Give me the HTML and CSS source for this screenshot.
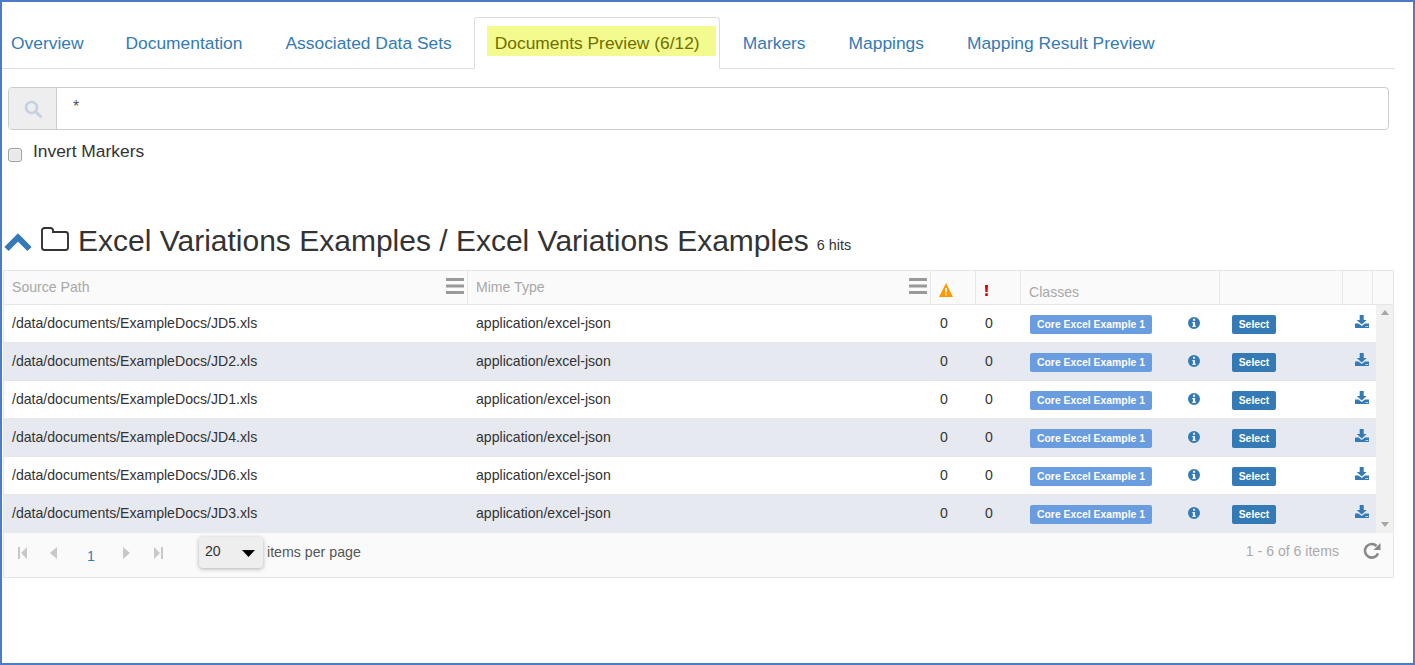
FILE: index.html
```html
<!DOCTYPE html>
<html lang="en">
<head>
<meta charset="utf-8">
<title>Documents Preview</title>
<link rel="stylesheet" href="styles.css">
</head>
<body>
<svg class="defs" width="0" height="0" aria-hidden="true">
  <symbol id="i-menu" viewBox="0 0 18 16"><rect y="0" width="18" height="3" rx="0.5"/><rect y="6.500" width="18" height="3" rx="0.5"/><rect y="13" width="18" height="3" rx="0.5"/></symbol>
  <symbol id="i-info" viewBox="0 0 12 12"><path fill-rule="evenodd" d="M6 0a6 6 0 1 1 0 12A6 6 0 0 1 6 0zM5 1.800v2h2.100v-2zM4.300 5v1.200H5v2.600h-.7V10h3.500V8.800H7.100V5z"/></symbol>
  <symbol id="i-down" viewBox="0 0 14 13"><path d="M4.700 0h4v5h3L6.700 9.500 1.700 5h3z"/><path d="M0 8.500h3.500L6.700 11l3.200-2.500H14V13H0z"/><rect x="10.500" y="11" width="1" height="1" fill="#fff"/><rect x="12.200" y="11" width="1" height="1" fill="#fff"/></symbol>
</svg>
<div class="frame">
  <nav class="tabs">
    <a class="tab">Overview</a>
    <a class="tab">Documentation</a>
    <a class="tab">Associated Data Sets</a>
    <a class="tab active"><span class="mark">Documents Preview (6/12)</span></a>
    <a class="tab">Markers</a>
    <a class="tab">Mappings</a>
    <a class="tab">Mapping Result Preview</a>
  </nav>

  <div class="search">
    <span class="addon">
      <svg width="18" height="18" viewBox="0 0 18 18"><circle cx="7.500" cy="7.500" r="5.500" fill="none" stroke="#c6d0e0" stroke-width="2.600"/><path d="M11.500 11.500l5 5" stroke="#c6d0e0" stroke-width="3" stroke-linecap="round"/></svg>
    </span>
    <span class="query">*</span>
  </div>

  <label class="invert"><span class="check"></span><span>Invert Markers</span></label>

  <h2 class="title">
    <svg class="chev" width="28" height="20" viewBox="0 0 28 20"><path d="M2.500 17L14 5.500 25.500 17" fill="none" stroke="#337ab7" stroke-width="6"/></svg>
    <svg class="folder" width="28" height="24" viewBox="0 0 28 24"><path d="M1 20.500V3.500A2.500 2.500 0 0 1 3.500 1h6A2.500 2.500 0 0 1 12 3.500V5h12.500A2.500 2.500 0 0 1 27 7.500v13a2.500 2.500 0 0 1-2.500 2.500h-21A2.500 2.500 0 0 1 1 20.500z" fill="none" stroke="#333" stroke-width="1.900"/></svg>
    <span>Excel Variations Examples / Excel Variations Examples</span>
    <small class="hits">6 hits</small>
  </h2>

  <section class="grid">
    <div class="row head">
      <div class="cell"><span>Source Path</span><svg class="menu" width="18" height="16"><use href="#i-menu"/></svg></div>
      <div class="cell"><span>Mime Type</span><svg class="menu" width="18" height="16"><use href="#i-menu"/></svg></div>
      <div class="cell warn-cell"><svg width="14" height="14" viewBox="0 0 14 14"><path fill-rule="evenodd" d="M7 0l7 14H0zM6 5l.3 4.500h1.400L8 5zM6.200 10.500v1.800h1.600v-1.800z" fill="#f90"/></svg></div>
      <div class="cell err-cell"><svg width="3" height="11" viewBox="0 0 3 11"><path d="M0 0h3L2.600 7H.4zM.2 8.300h2.600V11H.2z" fill="#e30000"/></svg></div>
      <div class="cell classes"><span>Classes</span></div>
      <div class="cell"></div>
      <div class="cell"></div>
      <div class="cell"></div>
    </div>
    <div class="body">
      <div class="rows">
        <div class="row item"><div class="cell">/data/documents/ExampleDocs/JD5.xls</div><div class="cell">application/excel-json</div><div class="cell num">0</div><div class="cell num">0</div><div class="cell act"><span class="label">Core Excel Example 1</span><svg class="info" width="12" height="12"><use href="#i-info"/></svg></div><div class="cell sel"><span class="btn">Select</span></div><div class="cell dl"><svg width="14" height="13"><use href="#i-down"/></svg></div></div>
        <div class="row item alt"><div class="cell">/data/documents/ExampleDocs/JD2.xls</div><div class="cell">application/excel-json</div><div class="cell num">0</div><div class="cell num">0</div><div class="cell act"><span class="label">Core Excel Example 1</span><svg class="info" width="12" height="12"><use href="#i-info"/></svg></div><div class="cell sel"><span class="btn">Select</span></div><div class="cell dl"><svg width="14" height="13"><use href="#i-down"/></svg></div></div>
        <div class="row item"><div class="cell">/data/documents/ExampleDocs/JD1.xls</div><div class="cell">application/excel-json</div><div class="cell num">0</div><div class="cell num">0</div><div class="cell act"><span class="label">Core Excel Example 1</span><svg class="info" width="12" height="12"><use href="#i-info"/></svg></div><div class="cell sel"><span class="btn">Select</span></div><div class="cell dl"><svg width="14" height="13"><use href="#i-down"/></svg></div></div>
        <div class="row item alt"><div class="cell">/data/documents/ExampleDocs/JD4.xls</div><div class="cell">application/excel-json</div><div class="cell num">0</div><div class="cell num">0</div><div class="cell act"><span class="label">Core Excel Example 1</span><svg class="info" width="12" height="12"><use href="#i-info"/></svg></div><div class="cell sel"><span class="btn">Select</span></div><div class="cell dl"><svg width="14" height="13"><use href="#i-down"/></svg></div></div>
        <div class="row item"><div class="cell">/data/documents/ExampleDocs/JD6.xls</div><div class="cell">application/excel-json</div><div class="cell num">0</div><div class="cell num">0</div><div class="cell act"><span class="label">Core Excel Example 1</span><svg class="info" width="12" height="12"><use href="#i-info"/></svg></div><div class="cell sel"><span class="btn">Select</span></div><div class="cell dl"><svg width="14" height="13"><use href="#i-down"/></svg></div></div>
        <div class="row item alt"><div class="cell">/data/documents/ExampleDocs/JD3.xls</div><div class="cell">application/excel-json</div><div class="cell num">0</div><div class="cell num">0</div><div class="cell act"><span class="label">Core Excel Example 1</span><svg class="info" width="12" height="12"><use href="#i-info"/></svg></div><div class="cell sel"><span class="btn">Select</span></div><div class="cell dl"><svg width="14" height="13"><use href="#i-down"/></svg></div></div>
      </div>
      <div class="scrollbar">
        <svg width="8" height="5" viewBox="0 0 8 5"><path d="M4 0l4 5H0z" fill="#a6a6a6"/></svg>
        <svg width="8" height="5" viewBox="0 0 8 5"><path d="M4 5l4-5H0z" fill="#a6a6a6"/></svg>
      </div>
    </div>
    <footer class="pager">
      <div class="nav">
        <svg class="nav-i" width="10" height="12" viewBox="0 0 10 12"><path d="M0 0h2v12H0zM9 0v12L3 6z"/></svg>
        <svg class="nav-i prev" width="7" height="12" viewBox="0 0 7 12"><path d="M7 0v12L0 6z"/></svg>
        <span class="page">1</span>
        <svg class="nav-i next" width="7" height="12" viewBox="0 0 7 12"><path d="M0 0v12l7-6z"/></svg>
        <svg class="nav-i last" width="10" height="12" viewBox="0 0 10 12"><path d="M10 0H8v12h2zM1 0v12l6-6z"/></svg>
      </div>
      <div class="size"><span>20</span><svg width="13" height="7" viewBox="0 0 13 7"><path d="M0 0h13L6.500 7z"/></svg></div>
      <span class="per">items per page</span>
      <span class="count">1 - 6 of 6 items</span>
      <svg class="refresh" width="18" height="18" viewBox="0 0 18 18"><path d="M15 11.500A6.800 6.800 0 1 1 13.600 4" fill="none" stroke="#888" stroke-width="2.600"/><path d="M17.500 1v7h-7z" fill="#888"/></svg>
    </footer>
  </section>
</div>
</body>
</html>
```

FILE: styles.css
```css
* { box-sizing: border-box; }
html, body { margin: 0; padding: 0; background: #fff; }
body { font-family: "Liberation Sans", Arial, sans-serif; font-size: 14.1px; color: #333; }
.defs { display: block; height: 0; }
.frame { width: 1415px; height: 665px; border: 2px solid #4a7cc9; overflow: hidden; }

.tabs { display: flex; height: 67px; padding-top: 15px; border-bottom: 1px solid #ddd; margin-right: 18px; }
.tab { display: block; height: 52px; padding: 15px 20px 0; margin-right: 1px; font-size: 17.4px; line-height: 20px; color: #337ab7; border: 1px solid transparent; white-space: nowrap; }
.tab:first-child { padding: 15px 19px 0 8px; }
.active { flex: none; width: 246px; padding: 8px 0 0 12px; margin-right: 2px; background: #fff; border-color: #ddd #ddd #fff; border-radius: 4px 4px 0 0; color: #333; }
.mark { display: block; width: 229px; height: 30px; padding: 7px 0 0 8px; background: #f3fb8e; color: #6e6e00; }

.search { display: flex; height: 43px; margin: 18px 0 0 6px; width: 1381px; border: 1px solid #ccc; border-radius: 4px; }
.addon { display: flex; width: 48px; align-items: center; justify-content: center; background: #eee; border-right: 1px solid #ccc; border-radius: 3px 0 0 3px; }
.query { padding: 9px 0 0 16px; font-size: 16px; line-height: 20px; color: #555; }

.invert { display: flex; margin: 10px 0 0 6px; font-size: 17.4px; line-height: 22px; color: #333; }
.check { width: 14px; height: 14px; margin: 8px 11px 0 0; background: #e9e9e9; border: 1px solid #a0a0a0; border-radius: 3px; box-shadow: inset 0 0 0 1px #f0f0f0; }

.title { display: flex; align-items: center; height: 40px; margin: 59px 0 0 0; font-weight: 400; font-size: 30px; line-height: 40px; color: #333; white-space: nowrap; }
.chev { margin: 1px 0 0 2px; }
.folder { margin: -5px 9px 0 9px; }
.hits { margin: 8px 0 0 8px; font-size: 14.4px; color: #333; }

.grid { width: 1391px; height: 308px; margin: 9px 0 0 1px; border: 1px solid #e6e6e6; }
.row { display: grid; grid-template-columns: 464px 463px 45px 45px 199px 123px 30px 21px; }
.head { height: 34px; background: #fafafa; border-bottom: 1px solid #e6e6e6; color: #a8a8a8; }
.head .cell { display: flex; justify-content: space-between; padding: 8px 3px 0 8px; line-height: 16px; border-right: 1px solid #e6e6e6; }
.head .cell:last-child { border-right: 0; }
.menu { fill: #999; margin-top: -1px; }
.head .warn-cell { padding: 12px 0 0 8px; justify-content: flex-start; }
.head .err-cell { padding: 14px 0 0 9px; justify-content: flex-start; }
.head .classes { padding: 13px 0 0 8px; }

.body { display: flex; height: 228px; }
.rows { width: 1372px; }
.item { height: 38px; grid-template-columns: 464px 463px 45px 45px 199px 123px 33px; border-bottom: 1px solid #e6e6e6; background: #fff; color: #333; }
.item:last-child { border-bottom: 0; }
.alt { background: #e6e9f0; }
.item .cell { padding: 10px 0 0 8px; line-height: 16px; white-space: nowrap; }
.item .num { padding: 10px 0 0 9px; }
.item .act { display: flex; align-items: flex-start; padding: 10px 0 0 9px; }
.label { display: block; width: 122px; height: 19px; background: #6a9de0; color: #fff; font-size: 10.4px; font-weight: 700; line-height: 19px; text-align: center; border-radius: 2px; }
.info { fill: #337ab7; margin: 2px 0 0 36px; }
.item .sel { padding: 10px 0 0 12px; }
.btn { display: block; width: 44px; height: 19px; background: #337ab7; color: #fff; font-size: 10.4px; font-weight: 700; line-height: 19px; text-align: center; border-radius: 2px; }
.item .dl { padding: 10px 0 0 12px; fill: #337ab7; }

.scrollbar { display: flex; width: 17px; flex-direction: column; justify-content: space-between; align-items: center; padding: 5px 0 6px; background: #f1f1f1; }

.pager { display: flex; align-items: flex-start; height: 44px; background: #fafafa; color: #333; }
.nav { display: flex; align-items: flex-start; width: 195px; padding: 14px 0 0 14px; }
.nav-i { fill: #c8c8c8; flex: none; }
.prev { margin-left: 22px; }
.page { width: 10px; margin: -1px 0 0 30px; color: #337ab7; line-height: 20px; }
.next { margin-left: 26px; }
.last { margin-left: 23px; }
.size { display: flex; justify-content: space-between; width: 64px; height: 31px; margin-top: 4px; padding: 4px 8px 0 6px; background: #eee; border-radius: 4px; box-shadow: 0 1px 4px rgba(0,0,0,.3); line-height: 20px; }
.size svg { margin-top: 9px; }
.per { margin: 9px 0 0 4px; font-size: 14.2px; line-height: 20px; color: #555; }
.count { margin: 8px 0 0 auto; line-height: 20px; color: #aaa; }
.refresh { margin: 9px 12px 0 24px; }
```
